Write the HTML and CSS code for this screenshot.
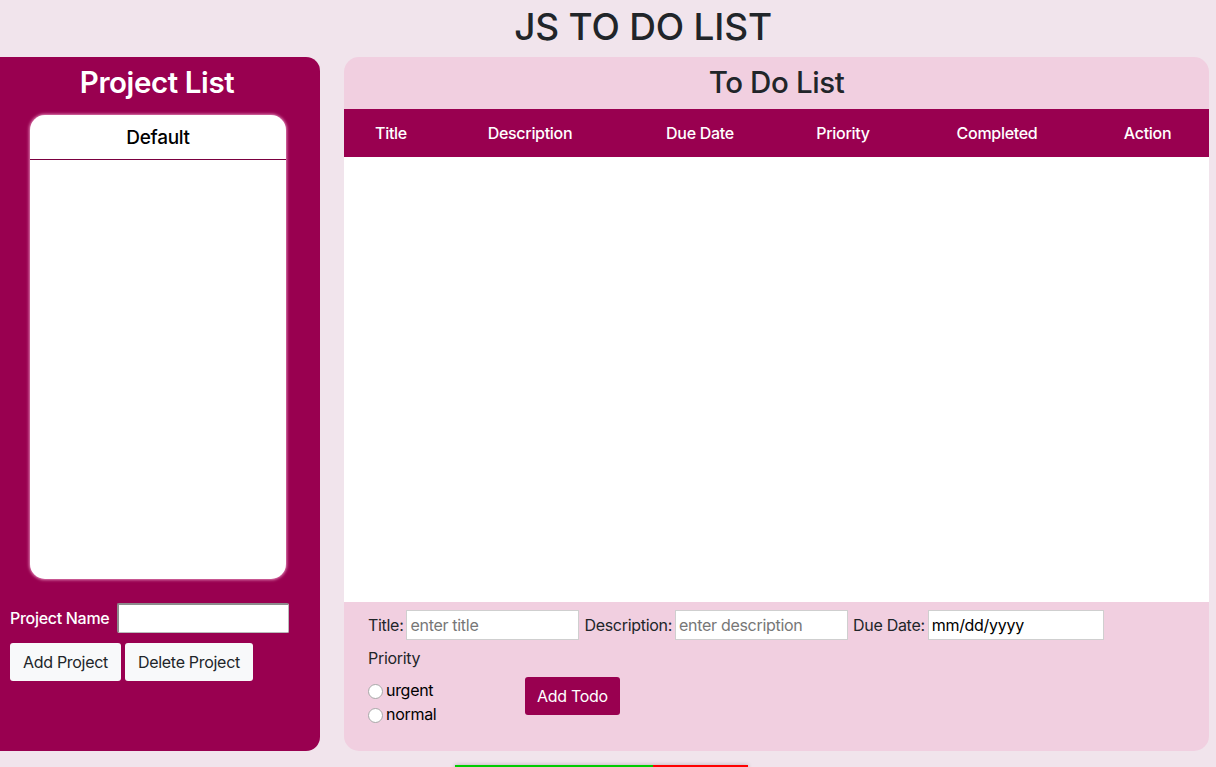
FILE: index.html
```html
<!DOCTYPE html>
<html lang="en">
<head>
<meta charset="utf-8">
<title>JS TO DO LIST</title>
<link rel="stylesheet" href="styles.css">
</head>
<body>
<h1 class="page-title">JS TO DO LIST</h1>
<div class="layout">
  <aside class="projects">
    <h2 class="projects-title">Project List</h2>
    <div class="project-card">
      <div class="project-item">Default</div>
    </div>
    <div class="project-form">
      <div class="name-row">
        <label class="name-label" for="pname">Project Name</label>
        <input class="name-input" id="pname" type="text">
      </div>
      <div class="btn-row">
        <button class="btn-light">Add Project</button>
        <button class="btn-light">Delete Project</button>
      </div>
    </div>
  </aside>
  <main class="todos">
    <h2 class="todos-title">To Do List</h2>
    <div class="table-head">
      <span>Title</span>
      <span>Description</span>
      <span>Due Date</span>
      <span>Priority</span>
      <span>Completed</span>
      <span>Action</span>
    </div>
    <div class="table-body"></div>
    <form class="todo-form">
      <div class="field-row">
        <label>Title:</label>
        <input class="field-input" type="text" placeholder="enter title">
        <label>Description:</label>
        <input class="field-input" type="text" placeholder="enter description">
        <label>Due Date:</label>
        <input class="field-input date-input" type="text" value="mm/dd/yyyy">
      </div>
      <div class="priority-label">Priority</div>
      <div class="bottom-row">
        <div class="radios">
          <label class="radio"><span class="radio-dot"></span>urgent</label>
          <label class="radio"><span class="radio-dot"></span>normal</label>
        </div>
        <button type="button" class="btn-add">Add Todo</button>
      </div>
    </form>
  </main>
</div>
<div class="progress">
  <div class="progress-done"></div>
  <div class="progress-left"></div>
</div>
</body>
</html>
```
FILE: styles.css
```css
* { box-sizing: border-box; }
html, body { margin: 0; padding: 0; }
body {
  background: #f1e4ec;
  font-family: Inter, "Noto Sans", "Liberation Sans", sans-serif;
  color: #212529;
  font-size: 16px;
  letter-spacing: -0.3px;
}
.page-title {
  margin: 0;
  height: 57px;
  padding-top: 4px;
  text-align: center;
  font-size: 37px;
  font-weight: 500;
  letter-spacing: -0.2px;
  line-height: 46px;
  padding-left: 70px;
}
.layout {
  display: flex;
  gap: 24px;
  align-items: stretch;
}
.projects {
  width: 320px;
  height: 694px;
  background: #990050;
  border-radius: 0 14px 14px 0;
  display: flex;
  flex-direction: column;
  align-items: flex-start;
}
.projects-title {
  margin: 0;
  width: 100%;
  text-align: center;
  color: #fff;
  font-size: 29.5px;
  font-weight: 600;
  letter-spacing: -0.4px;
  line-height: 50px;
  height: 58px;
  padding-right: 6px;
}
.project-card {
  margin-left: 30px;
  width: 256px;
  height: 464px;
  background: #fff;
  border-radius: 15px;
  box-shadow: 0 0 3px 1px rgba(255, 190, 225, 0.7);
  overflow: hidden;
}
.project-item {
  height: 45px;
  line-height: 46px;
  text-align: center;
  font-size: 19px;
  font-weight: 500;
  color: #000;
  border-bottom: 1px solid #7a0040;
}
.project-form {
  padding: 24px 0 0 10px;
  display: flex;
  flex-direction: column;
  gap: 10px;
}
.name-row {
  display: flex;
  align-items: center;
  gap: 8px;
}
.name-label {
  color: #fff;
  font-size: 16px;
  font-weight: 500;
}
.name-input {
  width: 172px;
  height: 30px;
  border: 1px solid #bbb;
  border-top: 2px solid #8c8c8c;
  border-left: 2px solid #8c8c8c;
  border-radius: 2px;
  background: #fff;
}
.btn-row {
  display: flex;
  gap: 4px;
}
.btn-light {
  background: #f8f9fa;
  border: none;
  border-radius: 3px;
  height: 38px;
  padding: 0 13px;
  font-family: inherit;
  font-size: 16px;
  letter-spacing: -0.3px;
  color: #212529;
}
.todos {
  width: 865px;
  height: 694px;
  background: #f1cfe0;
  border-radius: 15px;
  display: flex;
  flex-direction: column;
  overflow: hidden;
}
.todos-title {
  margin: 0;
  height: 52px;
  line-height: 50px;
  text-align: center;
  font-size: 29.5px;
  font-weight: 500;
  letter-spacing: -0.4px;
  color: #212529;
}
.table-head {
  display: grid;
  grid-template-columns: 94px 184px 156px 130px 178px 123px;
  height: 48px;
  align-items: center;
  background: #990050;
  color: #fff;
  font-weight: 500;
  font-size: 16px;
  text-align: center;
}
.table-body {
  height: 445px;
  background: #fff;
}
.todo-form {
  margin: 0;
  padding: 8px 24px 0 24px;
}
.field-row {
  display: flex;
  align-items: center;
  height: 29px;
  font-size: 16px;
}
.field-row label { margin-right: 3px; }
.field-input {
  width: 173px;
  height: 30px;
  border: 1px solid #cfcfcf;
  background: #fff;
  font-family: inherit;
  font-size: 16px;
  letter-spacing: -0.3px;
  padding: 0 3px;
  margin-right: 5px;
  color: #000;
}
.field-input::placeholder { color: #777; }
.date-input { width: 176px; }
.priority-label {
  margin-top: 9px;
  line-height: 20px;
}
.bottom-row {
  display: flex;
  align-items: center;
  margin-top: 12px;
}
.radios {
  display: flex;
  flex-direction: column;
  gap: 4px;
  width: 157px;
}
.radio {
  display: flex;
  align-items: center;
  font-size: 16px;
  color: #000;
  line-height: 20px;
}
.radio-dot {
  width: 15px;
  height: 15px;
  border-radius: 50%;
  border: 1px solid #a8a8a8;
  background: #fff;
  margin-right: 3px;
  margin-top: 3px;
}
.btn-add {
  background: #990050;
  color: #fff;
  border: none;
  border-radius: 3px;
  height: 38px;
  width: 95px;
  font-family: inherit;
  font-size: 16px;
  letter-spacing: -0.3px;
  margin-top: -12px;
}
.progress {
  display: flex;
  width: 293px;
  height: 10px;
  margin: 14px 0 0 455px;
  box-shadow: 0 0 4px rgba(0, 0, 0, 0.25);
}
.progress-done { width: 198px; background: #00cc00; }
.progress-left { flex: 1; background: #ff0000; }
```
